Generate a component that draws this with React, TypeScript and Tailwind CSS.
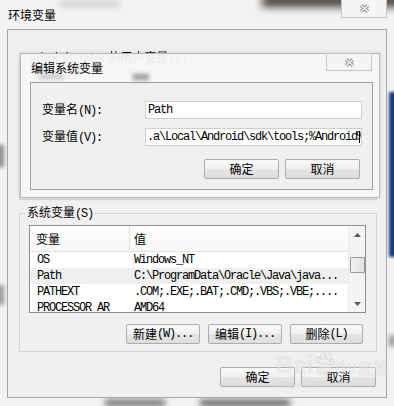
import React from 'react';

const mono = "font-['Liberation_Mono','Noto_Sans_CJK_SC',monospace] text-[12px] tracking-[-1.2px]";

const rows = [
  { name: 'OS', value: 'Windows_NT', sel: false },
  { name: 'Path', value: 'C:\\ProgramData\\Oracle\\Java\\java...', sel: true },
  { name: 'PATHEXT', value: '.COM;.EXE;.BAT;.CMD;.VBS;.VBE;....', sel: false },
  { name: 'PROCESSOR_AR', value: 'AMD64', sel: false },
];

function CloseBtn({ className }: { className: string }) {
  return (
    <div className={`flex items-center justify-center w-[46px] h-[18px] border border-[#c6c6c6] bg-[#f5f5f5] ${className}`}>
      <svg width="11" height="9" viewBox="0 0 11 9">
        <path d="M2 1.5 L9 7.5 M9 1.5 L2 7.5" stroke="#8c8c8c" strokeWidth="3.4" />
        <path d="M2 1.5 L9 7.5 M9 1.5 L2 7.5" stroke="#ffffff" strokeWidth="1.3" />
      </svg>
    </div>
  );
}

function Btn({ children, className }: { children: React.ReactNode; className: string }) {
  return (
    <div className={`flex items-center justify-center h-[20px] border border-[#acacac] rounded-[2px] bg-[linear-gradient(#f8f8f8_0%,#f0f0f0_50%,#e5e5e5_51%,#dedede_100%)] text-[12px] leading-[14px] ${className}`}>
      {children}
    </div>
  );
}

function Arrow({ up }: { up: boolean }) {
  return (
    <svg width="7" height="4" viewBox="0 0 7 4">
      <path d={up ? 'M0 4 L3.5 0 L7 4 Z' : 'M0 0 L3.5 4 L7 0 Z'} fill="#5a5a5a" />
    </svg>
  );
}

export default function App() {
  return (
    <div className="relative w-[394px] h-[406px] overflow-hidden bg-[#f3f3f3] text-black font-['Noto_Sans_CJK_SC',sans-serif]">
      {/* blurred desktop seen through the glass frame */}
      <div className="absolute left-[262px] -top-[5px] w-[150px] h-[12px] bg-[#4b3b33] blur-[4px]" />
      <div className="absolute left-[60px] top-[1px] w-[60px] h-[6px] bg-[#cfcfcf] blur-[3px]" />
      <div className="absolute left-[389px] top-[92px] w-[10px] h-[165px] bg-[#1b3c78] blur-[1.5px]" />
      <div className="absolute -left-[3px] top-[145px] w-[7px] h-[22px] bg-[#8a8a8a] blur-[2px]" />
      <div className="absolute -left-[3px] top-[285px] w-[7px] h-[20px] bg-[#9a9a9a] blur-[2px]" />
      <div className="absolute left-[389px] top-[335px] w-[6px] h-[12px] bg-[#9a9a9a] blur-[2px]" />
      <div className="absolute left-[105px] top-[400px] w-[60px] h-[6px] bg-[#606060] blur-[3px]" />
      <div className="absolute left-[200px] top-[400px] w-[90px] h-[6px] bg-[#505050] blur-[3px]" />

      {/* 环境变量 window */}
      <div className="relative flex flex-col h-full">
        <div className="flex h-[29px] items-start justify-between pl-[8px] pr-[7px]">
          <span className="mt-[7px] text-[12px] leading-[16px]">环境变量</span>
          <CloseBtn className="border-t-0" />
        </div>
        <div className="mx-[7px] h-[369px] border border-[#a6a6a6] bg-[#f0f0f0] flex flex-col pl-[11px] pr-[9px]">
          <fieldset className="mt-[20px] h-[150px] border border-[#d5d5d5] px-[9px]">
            <legend className="ml-[-1px] px-[1px] text-[12px] leading-[14px] blur-[0.4px]">
              Administrator 的用户变量<span className={mono}>(U)</span>
            </legend>
          </fieldset>

          <fieldset className="mt-[5px] h-[147px] border border-[#d5d5d5] pl-[9px] pr-[10px] pt-[4px]">
            <legend className="ml-[-3px] px-[1px] text-[12px] leading-[14px]">
              系统变量<span className={mono}>(S)</span>
            </legend>
            <div className="flex w-[337px] h-[88px] border border-[#8e8e8e] bg-white">
              <div className="flex-1 flex flex-col overflow-hidden">
                <div className="flex h-[26px] shrink-0 border-b border-[#e3e3e3] bg-[linear-gradient(#ffffff,#f7f7f7)] text-[12px]">
                  <div className="w-[100px] pl-[6px] flex items-center border-r border-[#e3e3e3]">变量</div>
                  <div className="pl-[4px] flex items-center">值</div>
                </div>
                {rows.map((r) => (
                  <div key={r.name} className={`flex h-[16px] shrink-0 items-center whitespace-nowrap ${mono} ${r.sel ? 'bg-[#f0f0f0]' : ''}`}>
                    <div className="w-[100px] pl-[7px] overflow-hidden">{r.name}</div>
                    <div className="pl-[4px]">{r.value}</div>
                  </div>
                ))}
              </div>
              <div className="w-[17px] flex flex-col items-center bg-[#f4f4f4] border-l border-[#eaeaea]">
                <div className="h-[17px] flex items-center justify-center">
                  <Arrow up />
                </div>
                <div className="mt-[14px] w-[15px] h-[16px] border border-[#9b9b9b] rounded-[1px] bg-[linear-gradient(90deg,#f2f2f2,#e2e2e2)]" />
                <div className="mt-auto h-[17px] flex items-center justify-center">
                  <Arrow up={false} />
                </div>
              </div>
            </div>
            <div className="mt-[11px] mr-[3px] flex justify-end gap-[8px]">
              <Btn className="w-[74px]">新建<span className={mono}>(W)...</span></Btn>
              <Btn className="w-[74px]">编辑<span className={mono}>(I)...</span></Btn>
              <Btn className="w-[73px]">删除<span className={mono}>(L)</span></Btn>
            </div>
          </fieldset>

          <div className="mt-[15px] mr-[1px] flex justify-end gap-[6px]">
            <Btn className="w-[75px]">确定</Btn>
            <Btn className="w-[75px]">取消</Btn>
          </div>
        </div>
      </div>

      {/* 编辑系统变量 dialog */}
      <div className="absolute left-[20px] top-[53px] w-[360px] h-[145px] border border-[#b6b6b6] bg-[#f6f6f6]/95 shadow-[0_0_5px_rgba(0,0,0,0.12)] flex flex-col">
        <div className="relative flex h-[28px] items-start justify-between pl-[10px] pr-[7px]">
          <div className="absolute left-[18px] top-[20px] w-[25px] h-[5px] bg-[#c8c8c8] blur-[2px]" />
          <div className="absolute left-[112px] top-[20px] w-[16px] h-[6px] bg-[#9a9a9a] blur-[2px]" />
          <span className="relative mt-[6px] text-[12px] leading-[16px]">编辑系统变量</span>
          <CloseBtn className="-mt-px" />
        </div>
        <div className="ml-[9px] mr-[6px] h-[108px] border border-[#a0a0a0] bg-[#f0f0f0] flex flex-col">
          <div className="mt-[18px] flex items-center h-[18px] pl-[11px]">
            <div className="w-[103px] text-[12px] leading-[14px]">变量名<span className={mono}>(N):</span></div>
            <div className={`w-[217px] h-[18px] border border-[#cfcfcf] bg-white pl-[2px] flex items-center ${mono}`}>Path</div>
          </div>
          <div className="mt-[9px] flex items-center h-[18px] pl-[11px]">
            <div className="w-[103px] text-[12px] leading-[14px]">变量值<span className={mono}>(V):</span></div>
            <div className={`relative w-[217px] h-[18px] border border-[#cfcfcf] bg-white pl-[1px] flex items-center overflow-hidden whitespace-nowrap ${mono}`}>
              .a\Local\Android\sdk\tools;%Android%
              <div className="absolute right-[1px] top-[2px] w-px h-[12px] bg-black" />
            </div>
          </div>
          <div className="mt-[13px] pr-[12px] flex justify-end gap-[6px]">
            <Btn className="w-[75px]">确定</Btn>
            <Btn className="w-[75px]">取消</Btn>
          </div>
        </div>
      </div>

      {/* watermark */}
      <div className="absolute left-[276px] top-[352px] flex flex-col opacity-50 pointer-events-none">
        <div className="flex items-end text-[#e2e2e2] [text-shadow:0_0_1px_#b8b8b8]">
          <span className="font-['Liberation_Sans',sans-serif] font-bold text-[24px] leading-[26px]">Bai</span>
          <svg width="22" height="24" viewBox="0 0 22 24" className="mb-[2px]">
            <g fill="#e6e6e6" stroke="#bdbdbd" strokeWidth="0.8">
              <ellipse cx="5" cy="8" rx="2.6" ry="3.4" />
              <ellipse cx="10" cy="4" rx="2.6" ry="3.4" />
              <ellipse cx="15.5" cy="4.5" rx="2.6" ry="3.4" />
              <ellipse cx="19" cy="10" rx="2.4" ry="3.2" />
              <path d="M4 19 C5 13 9 11 12 11 C16 11 19 14 19 19 C19 23 14 22 12 22 C9 22 4 23 4 19 Z" />
            </g>
          </svg>
          <span className="font-['Liberation_Sans',sans-serif] font-bold text-[18px] leading-[22px]">du</span>
          <span className="ml-[1px] text-[15px] leading-[20px] font-bold">经验</span>
        </div>
        <span className="font-['Liberation_Serif',serif] text-[10px] leading-[11px] text-[#dcdcdc] [text-shadow:0_0_1px_#c0c0c0]">jingyan.baidu.com</span>
      </div>
    </div>
  );
}
